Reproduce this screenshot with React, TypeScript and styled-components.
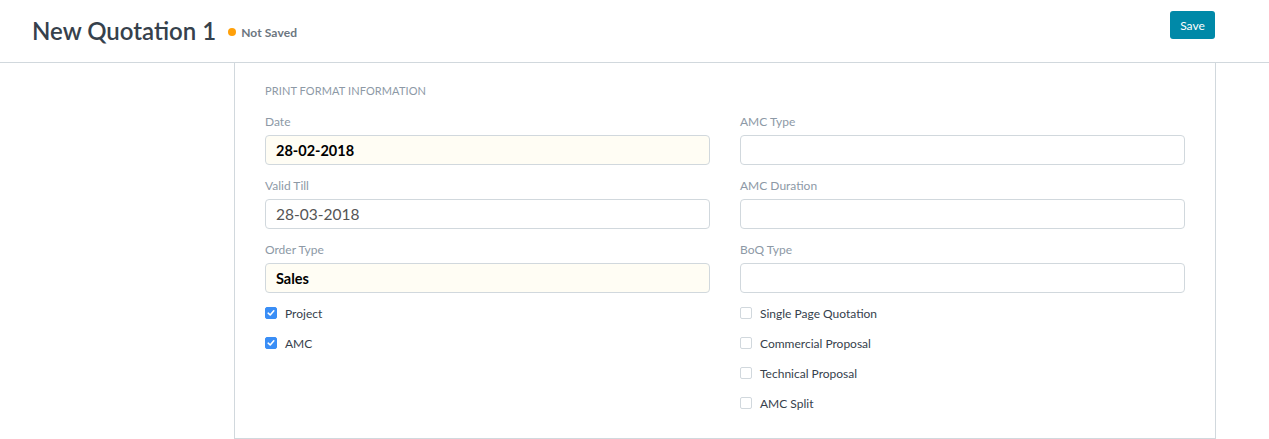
import React from "react";
import styled, { createGlobalStyle } from "styled-components";

const Global = createGlobalStyle`
  * { box-sizing: border-box; }
  html, body { margin: 0; padding: 0; background: #fff; }
  body { font-family: Lato, "Open Sans", sans-serif; color: #36414c; }
`;

const Header = styled.header`
  height: 63px;
  border-bottom: 1px solid #d1d8dd;
  display: flex;
  justify-content: space-between;
  align-items: flex-start;
  padding: 0 54px 0 32px;
`;

const TitleWrap = styled.div`
  display: flex;
  align-items: center;
  gap: 6px;
  margin-top: 16px;
`;

const Title = styled.h1`
  margin: 0;
  font-size: 24px;
  font-weight: 600;
  line-height: 30px;
  color: #36414c;
`;

const Indicator = styled.span`
  display: flex;
  align-items: center;
  gap: 5px;
  font-size: 12px;
  font-weight: 700;
  color: #6c7680;
  margin-left: 6px;
  margin-top: 2px;
  letter-spacing: 0.1px;
`;

const Dot = styled.span`
  width: 8px;
  height: 8px;
  border-radius: 50%;
  background: #ffa00a;
`;

const SaveButton = styled.button`
  margin-top: 11px;
  height: 28px;
  width: 45px;
  border: none;
  border-radius: 3px;
  background: #0089a8;
  color: #fff;
  font-family: inherit;
  font-size: 12px;
  padding: 0;
`;

const Card = styled.section`
  margin-left: 234px;
  width: 982px;
  border: 1px solid #d1d8dd;
  border-top: none;
  padding: 20px 29px 14px 30px;
`;

const SectionTitle = styled.div`
  font-size: 11px;
  line-height: 16px;
  text-transform: uppercase;
  color: #8d99a6;
  margin-bottom: 13px;
  letter-spacing: 0.1px;
`;

const Columns = styled.div`
  display: grid;
  grid-template-columns: 445px 445px;
  column-gap: 30px;
`;

const Column = styled.div`
  display: flex;
  flex-direction: column;
`;

const Field = styled.div`
  margin-bottom: 11px;
`;

const Label = styled.div`
  font-size: 12px;
  line-height: 18px;
  color: #8d99a6;
  padding-top: 1px;
  margin-bottom: 4px;
`;

const Input = styled.div<{ $filled?: boolean; $bold?: boolean }>`
  height: 30px;
  border: 1px solid #d1d8dd;
  border-radius: 4px;
  background: ${(p) => (p.$filled ? "#fffdf4" : "#fff")};
  padding: 0 10px;
  display: flex;
  align-items: center;
  font-size: ${(p) => (p.$bold ? "14.5px" : "15.5px")};
  font-weight: ${(p) => (p.$bold ? 700 : 400)};
  color: ${(p) => (p.$bold ? "#000" : "#555")};
`;

const CheckRow = styled.label`
  display: flex;
  align-items: center;
  height: 18px;
  margin-bottom: 12px;
  font-size: 12px;
  color: #36414c;
`;

const Box = styled.span<{ $checked?: boolean }>`
  width: 12px;
  height: 12px;
  border-radius: 2px;
  margin-right: 8px;
  display: flex;
  align-items: center;
  justify-content: center;
  background: ${(p) => (p.$checked ? "#3a8ef6" : "#fff")};
  border: 1px solid ${(p) => (p.$checked ? "#3a8ef6" : "#d1d8dd")};
`;

const Check = ({ checked, label }: { checked?: boolean; label: string }) => (
  <CheckRow>
    <Box $checked={checked}>
      {checked && (
        <svg width="8" height="8" viewBox="0 0 8 8">
          <path d="M1.2 4.2 L3.2 6 L6.8 1.8" fill="none" stroke="#fff" strokeWidth="1.6" strokeLinecap="round" strokeLinejoin="round" />
        </svg>
      )}
    </Box>
    {label}
  </CheckRow>
);

export default function App() {
  return (
    <>
      <Global />
      <Header>
        <TitleWrap>
          <Title>New Quotation 1</Title>
          <Indicator>
            <Dot />
            Not Saved
          </Indicator>
        </TitleWrap>
        <SaveButton>Save</SaveButton>
      </Header>
      <Card>
        <SectionTitle>Print Format Information</SectionTitle>
        <Columns>
          <Column>
            <Field>
              <Label>Date</Label>
              <Input $filled $bold>28-02-2018</Input>
            </Field>
            <Field>
              <Label>Valid Till</Label>
              <Input>28-03-2018</Input>
            </Field>
            <Field>
              <Label>Order Type</Label>
              <Input $filled $bold>Sales</Input>
            </Field>
            <Check checked label="Project" />
            <Check checked label="AMC" />
          </Column>
          <Column>
            <Field>
              <Label>AMC Type</Label>
              <Input />
            </Field>
            <Field>
              <Label>AMC Duration</Label>
              <Input />
            </Field>
            <Field>
              <Label>BoQ Type</Label>
              <Input />
            </Field>
            <Check label="Single Page Quotation" />
            <Check label="Commercial Proposal" />
            <Check label="Technical Proposal" />
            <Check label="AMC Split" />
          </Column>
        </Columns>
      </Card>
    </>
  );
}
